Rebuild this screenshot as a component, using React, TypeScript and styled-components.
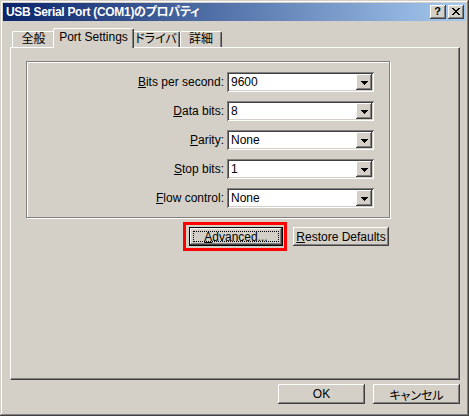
import React from "react";
import styled, { createGlobalStyle, css } from "styled-components";

const FONT = `"Liberation Sans", "Noto Sans CJK JP", sans-serif`;
const FACE = "#D4D0C8";

const GlobalStyle = createGlobalStyle`
  html, body {
    margin: 0;
    padding: 0;
    background: ${FACE};
  }
  body {
    font-family: ${FONT};
    font-size: 12px;
    font-feature-settings: "palt";
    color: #000;
  }
`;

const settings = [
  { key: "B", rest: "its per second:", value: "9600" },
  { key: "D", rest: "ata bits:", value: "8" },
  { key: "P", rest: "arity:", value: "None" },
  { key: "S", rest: "top bits:", value: "1" },
  { key: "F", rest: "low control:", value: "None" },
];

const tabs = [
  { label: "全般", width: 43 },
  { label: "Port Settings", width: 77, active: true },
  { label: "ドライバ", width: 48 },
  { label: "詳細", width: 42 },
];

const raised = css`
  box-shadow: inset -1px -1px #404040, inset 1px 1px #ffffff,
    inset -2px -2px #808080, inset 2px 2px ${FACE};
`;

const App: React.FC = () => {
  return (
    <>
      <GlobalStyle />
      <Window>
        <TitleBar>
          <Title>USB Serial Port (COM1)のプロパティ</Title>
          <CaptionButtons>
            <CaptionButton>
              <HelpMark>?</HelpMark>
            </CaptionButton>
            <CaptionButton>
              <svg width="8" height="7" viewBox="0 0 8 7" shapeRendering="crispEdges">
                <path
                  d="M0 0h2v1h-2zM6 0h2v1h-2zM1 1h2v1h-2zM5 1h2v1h-2zM2 2h4v1h-4zM3 3h2v1h-2zM2 4h4v1h-4zM1 5h2v1h-2zM5 5h2v1h-2zM0 6h2v1h-2zM6 6h2v1h-2z"
                  fill="#000"
                />
              </svg>
            </CaptionButton>
          </CaptionButtons>
        </TitleBar>

        <Body>
          <TabStrip>
            {tabs.map((t) => (
              <Tab key={t.label} $active={!!t.active} $width={t.width}>
                {t.label}
              </Tab>
            ))}
          </TabStrip>

          <Panel>
            <Frame>
              <FieldGrid>
                {settings.map((s) => (
                  <React.Fragment key={s.key}>
                    <Label>
                      <Key>{s.key}</Key>
                      {s.rest}
                    </Label>
                    <Combo>
                      <ComboValue>{s.value}</ComboValue>
                      <DropButton>
                        <svg width="7" height="4" viewBox="0 0 7 4" shapeRendering="crispEdges">
                          <path d="M0 0h7v1h-7zM1 1h5v1h-5zM2 2h3v1h-3zM3 3h1v1h-1z" fill="#000" />
                        </svg>
                      </DropButton>
                    </Combo>
                  </React.Fragment>
                ))}
              </FieldGrid>
            </Frame>

            <ButtonRow>
              <Highlight>
                <Button $width={94} $focused>
                  <Key>A</Key>dvanced...
                </Button>
              </Highlight>
              <Button $width={96}>
                <Key>R</Key>estore Defaults
              </Button>
            </ButtonRow>
          </Panel>

          <Footer>
            <Button $width={87} $height={20}>
              OK
            </Button>
            <Button $width={87} $height={20}>
              キャンセル
            </Button>
          </Footer>
        </Body>
      </Window>
    </>
  );
};

export default App;

//MARK: - Styled Components

const Window = styled.div`
  box-sizing: border-box;
  width: 469px;
  height: 416px;
  padding: 3px;
  background: ${FACE};
  box-shadow: inset -1px -1px #404040, inset 1px 1px ${FACE},
    inset -2px -2px #808080, inset 2px 2px #ffffff;
  display: flex;
  flex-direction: column;
`;

const TitleBar = styled.div`
  height: 18px;
  display: flex;
  align-items: center;
  justify-content: space-between;
  padding: 0 2px 0 3px;
  background: linear-gradient(to right, #0a246a, #a6caf0);
`;

const Title = styled.span`
  color: #ffffff;
  font-weight: bold;
  font-size: 12px;
  letter-spacing: -0.3px;
  line-height: 18px;
  white-space: nowrap;
`;

const CaptionButtons = styled.div`
  display: flex;
  gap: 2px;
`;

const CaptionButton = styled.div`
  box-sizing: border-box;
  width: 16px;
  height: 14px;
  background: ${FACE};
  ${raised};
  display: flex;
  align-items: center;
  justify-content: center;
  padding: 0 1px 1px 0;
`;

const HelpMark = styled.span`
  font-family: "Liberation Sans", sans-serif;
  font-weight: bold;
  font-size: 11px;
  line-height: 11px;
`;

const Body = styled.div`
  flex: 1;
  padding: 7px 0 0 7px;
  display: flex;
  flex-direction: column;
`;

const TabStrip = styled.div`
  display: flex;
  align-items: flex-end;
  height: 19px;
  padding-left: 2px;
`;

const Tab = styled.div<{ $active: boolean; $width: number }>`
  box-sizing: border-box;
  width: ${(p) => p.$width}px;
  height: 16px;
  background: ${FACE};
  border-top: 1px solid #ffffff;
  border-left: 1px solid #ffffff;
  border-right: 1px solid #404040;
  border-radius: 2px 2px 0 0;
  box-shadow: inset -1px 0 #808080;
  font-size: 12px;
  line-height: 14px;
  text-align: center;
  white-space: nowrap;

  ${(p) =>
    p.$active &&
    css`
      position: relative;
      z-index: 1;
      width: ${p.$width + 4}px;
      height: 20px;
      margin: 0 -2px -1px;
      line-height: 16px;
    `}
`;

const Panel = styled.div`
  box-sizing: border-box;
  width: 450px;
  height: 333px;
  padding: 13px 0 0 15px;
  background: ${FACE};
  border-top: 1px solid #ffffff;
  border-left: 1px solid #ffffff;
  border-right: 1px solid #404040;
  border-bottom: 1px solid #404040;
  box-shadow: inset -1px -1px #808080;
`;

const Frame = styled.div`
  box-sizing: border-box;
  width: 364px;
  height: 157px;
  border: 1px solid #808080;
  box-shadow: inset 1px 1px #ffffff, 1px 1px #ffffff;
  padding: 10px 15px 9px 0;
`;

const FieldGrid = styled.div`
  display: grid;
  grid-template-columns: 1fr 147px;
  column-gap: 3px;
  row-gap: 9px;
  align-items: center;
`;

const Label = styled.span`
  text-align: right;
  white-space: nowrap;
`;

const Key = styled.span`
  text-decoration: underline;
`;

const Combo = styled.div`
  box-sizing: border-box;
  height: 20px;
  padding: 2px;
  display: flex;
  align-items: stretch;
  background: #ffffff;
  box-shadow: inset 1px 1px #808080, inset -1px -1px #ffffff,
    inset 2px 2px #404040, inset -2px -2px ${FACE};
`;

const ComboValue = styled.span`
  flex: 1;
  padding-left: 2px;
  line-height: 16px;
`;

const DropButton = styled.div`
  box-sizing: border-box;
  width: 16px;
  background: ${FACE};
  ${raised};
  display: flex;
  align-items: center;
  justify-content: center;
  padding-top: 1px;
`;

const ButtonRow = styled.div`
  width: 363px;
  margin-top: 9px;
  display: flex;
  justify-content: flex-end;
  gap: 10px;
`;

const Highlight = styled.div`
  position: relative;
  display: flex;

  &::after {
    content: "";
    position: absolute;
    inset: -5px -4px -5px -6px;
    border: 3px solid #ff0000;
    pointer-events: none;
  }
`;

const Button = styled.div<{ $width: number; $height?: number; $focused?: boolean }>`
  position: relative;
  box-sizing: border-box;
  width: ${(p) => p.$width}px;
  height: ${(p) => p.$height ?? 19}px;
  background: ${FACE};
  ${raised};
  display: flex;
  align-items: center;
  justify-content: center;
  font-size: 12px;
  white-space: nowrap;

  ${(p) =>
    p.$focused &&
    css`
      border: 1px solid #000000;
      box-shadow: inset -1px -1px #404040, inset 1px 1px #ffffff,
        inset -2px -2px #808080;

      &::after {
        content: "";
        position: absolute;
        inset: 3px;
        border: 1px dotted #000000;
      }
    `}
`;

const Footer = styled.div`
  width: 450px;
  margin-top: 4px;
  display: flex;
  justify-content: flex-end;
  gap: 8px;
`;
